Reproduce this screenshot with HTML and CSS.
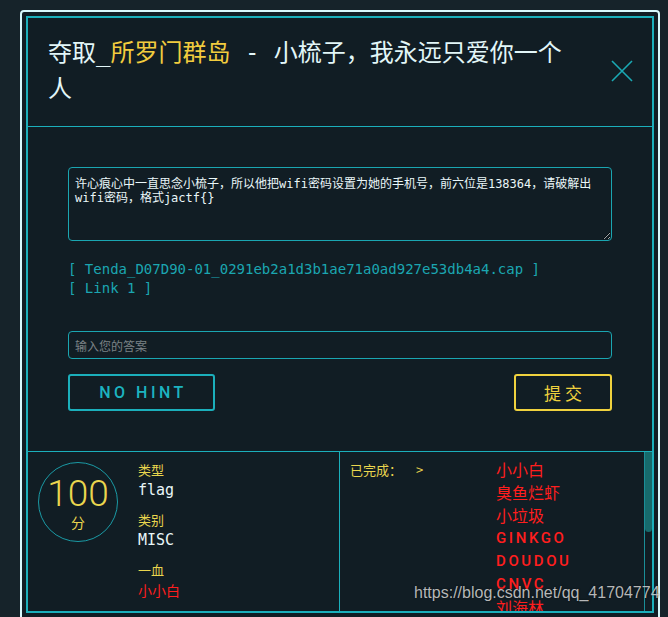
FILE: index.html
```html
<!DOCTYPE html>
<html lang="zh-CN">
<head>
    <meta charset="utf-8" />
    <meta name="viewport" content="width=device-width, initial-scale=1" />
    <title>夺取_所罗门群岛</title>
    <link rel="stylesheet" href="styles.css">
</head>
<body>
    <div class="modal">
        <div class="panel">
            <header class="panel-head">
                <h2 class="title">夺取_<span class="hl">所罗门群岛</span> - 小梳子，我永远只爱你一个人</h2>
                <button class="close" aria-label="关闭">
                    <svg width="22" height="22" viewBox="0 0 22 22"><path d="M1 1L21 21M21 1L1 21" stroke="#1aa9b4" stroke-width="1.6" fill="none"/></svg>
                </button>
            </header>

            <section class="panel-body">
                <textarea class="desc" readonly>许心痕心中一直思念小梳子，所以他把wifi密码设置为她的手机号，前六位是138364，请破解出wifi密码，格式jactf{}</textarea>
                <div class="files">
                    <a href="#">[ Tenda_D07D90-01_0291eb2a1d3b1ae71a0ad927e53db4a4.cap ]</a>
                    <a href="#">[ Link 1 ]</a>
                </div>
                <input class="answer" type="text" placeholder="输入您的答案">
                <div class="actions">
                    <button class="btn btn-hint">NO HINT</button>
                    <button class="btn btn-submit">提交</button>
                </div>
            </section>

            <section class="panel-foot">
                <div class="meta">
                    <div class="score">
                        <span class="num">100</span>
                        <span class="unit">分</span>
                    </div>
                    <dl class="info">
                        <dt>类型</dt><dd>flag</dd>
                        <dt>类别</dt><dd>MISC</dd>
                        <dt>一血</dt><dd class="red">小小白</dd>
                    </dl>
                </div>
                <div class="solves">
                    <div class="solves-list">
                        <div class="solves-label">已完成：<span class="arrow">&gt;</span></div>
                        <ul class="solvers">
                            <li>小小白</li>
                            <li>臭鱼烂虾</li>
                            <li>小垃圾</li>
                            <li class="latin">GINKGO</li>
                            <li class="latin">DOUDOU</li>
                            <li class="latin">CNVC</li>
                            <li>刘海林</li>
                        </ul>
                    </div>
                    <div class="scrollbar"><div class="thumb"></div></div>
                </div>
            </section>
        </div>
    </div>
    <div class="watermark">https://blog.csdn.net/qq_41704774</div>
</body>
</html>
```

FILE: styles.css
```css
* { margin: 0; padding: 0; box-sizing: border-box; }
body {
    background: #16232a;
    font-family: "DejaVu Sans Mono", "Noto Sans CJK SC", monospace;
    color: #e2f6f8;
    height: 617px;
    overflow: hidden;
    position: relative;
}

.modal {
    margin: 10px 0 0 20px;
    width: 640px;
    height: 640px;
    border: 2px solid #d8f8fc;
    border-radius: 4px;
    padding: 4px 4px 0 4px;
    background: #111d24;
}

.panel {
    border: 2px solid #1bafbb;
    background: #111d24;
}

/* cabecera */
.panel-head {
    display: flex;
    align-items: center;
    padding: 17px 19px 19px 20px;
    border-bottom: 1px solid #1bafbb;
}
.title {
    flex: 1;
    font-size: 24px;
    font-weight: normal;
    line-height: 36px;
    color: #e2f6f8;
    margin-right: 30px;
}
.title .hl { color: #f2cc3e; }
.close {
    background: none;
    border: 0;
    width: 22px;
    height: 22px;
    display: flex;
}

/* cuerpo */
.panel-body { padding: 40px; }
.desc {
    display: block;
    width: 100%;
    height: 74px;
    background: transparent;
    border: 1px solid #1aa6b1;
    border-radius: 4px;
    color: #eaf7f9;
    font-family: "DejaVu Sans Mono", "Noto Sans CJK SC", monospace;
    font-size: 12px;
    line-height: 14px;
    padding: 9px 6px;
    resize: vertical;
    outline: none;
}
.files { margin-top: 19px; display: flex; flex-direction: column; }
.files a {
    color: #1ba6b1;
    text-decoration: none;
    font-size: 14px;
    line-height: 19px;
}
.answer {
    display: block;
    width: 100%;
    height: 28px;
    margin-top: 33px;
    background: transparent;
    border: 1px solid #1aa6b1;
    border-radius: 4px;
    padding: 0 6px;
    color: #ddd;
    font-family: "Noto Sans CJK SC", sans-serif;
    font-size: 12px;
    outline: none;
}
.answer::placeholder { color: #7b8286; }

.actions {
    display: flex;
    justify-content: space-between;
    margin-top: 15px;
}
.btn {
    height: 37px;
    background: transparent;
    border-radius: 3px;
    border: 2px solid;
}
.btn-hint {
    width: 147px;
    border-color: #1bafbb;
    color: #1cb3c0;
    font-family: Roboto, "DejaVu Sans", sans-serif;
    font-weight: 500;
    font-size: 16px;
    letter-spacing: 3.5px;
    padding-left: 3px;
}
.btn-submit {
    width: 98px;
    border-color: #f0d23e;
    color: #f0d23e;
    font-family: "Noto Sans CJK SC", sans-serif;
    font-size: 17px;
    letter-spacing: 4px;
    padding-left: 4px;
}

/* pie */
.panel-foot {
    display: grid;
    grid-template-columns: 312px 1fr;
    height: 160px;
    border-top: 1px solid #1bafbb;
}
.meta {
    display: flex;
    align-items: flex-start;
    padding: 10px 0 0 10px;
    border-right: 1px solid #1bafbb;
}
.score {
    width: 80px;
    height: 80px;
    border: 1px solid #1a9aa5;
    border-radius: 50%;
    display: flex;
    flex-direction: column;
    align-items: center;
    justify-content: center;
    color: #ead64e;
    margin-right: 20px;
}
.score .num {
    font-family: Roboto, "Liberation Sans", sans-serif;
    font-weight: 300;
    font-size: 37px;
    line-height: 36px;
    margin-top: 4px;
}
.score .unit {
    font-family: "Noto Sans CJK SC", sans-serif;
    font-size: 14px;
    line-height: 20px;
}
.info { margin-top: -2px; }
.info dt {
    color: #ead64e;
    font-family: "Noto Sans CJK SC", sans-serif;
    font-size: 13px;
    line-height: 20px;
}
.info dd {
    font-size: 15px;
    line-height: 21px;
    margin-bottom: 9px;
    color: #e8f6f8;
}
.info dd.red {
    color: #ff1e1e;
    font-family: "Noto Sans CJK SC", sans-serif;
    font-size: 14px;
}

.solves {
    display: flex;
    overflow: hidden;
}
.solves-list {
    flex: 1;
    display: grid;
    grid-template-columns: 146px 1fr;
    align-content: start;
    padding: 6px 0 0 10px;
}
.scrollbar {
    width: 8px;
    border-left: 1px solid #1a8e98;
}
.thumb {
    height: 80px;
    background: #176a6c;
    border-radius: 0 0 4px 4px;
}
.solves-label {
    color: #ead64e;
    font-family: "Noto Sans CJK SC", sans-serif;
    font-size: 13px;
    line-height: 23px;
}
.solves-label .arrow { margin-left: 14px; }
.solvers { list-style: none; }
.solvers li {
    color: #ff1e1e;
    font-family: "Noto Sans CJK SC", sans-serif;
    font-size: 16px;
    line-height: 23px;
    white-space: nowrap;
}
.solvers li.latin {
    font-family: Roboto, "DejaVu Sans", sans-serif;
    font-weight: 500;
    font-size: 15px;
    letter-spacing: 2.6px;
}

.watermark {
    position: absolute;
    left: 414px;
    top: 584px;
    font-family: "Liberation Sans", Arial, sans-serif;
    font-size: 16px;
    color: rgba(215, 215, 215, 0.85);
    text-shadow: 0 0 2px rgba(0, 0, 0, 0.6);
}
```
